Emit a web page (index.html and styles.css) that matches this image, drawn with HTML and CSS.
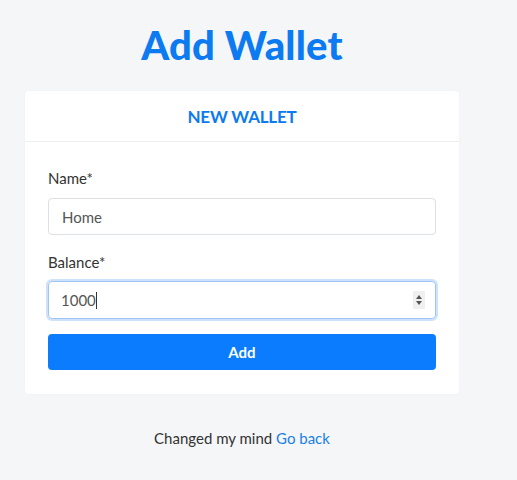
FILE: index.html
```html
<!DOCTYPE html>
<html>
<head>
<meta charset="utf-8">
<link rel="stylesheet" href="styles.css">
</head>
<body>
<div class="page">
  <h1 class="title">Add Wallet</h1>
  <div class="card">
    <div class="card-header">NEW WALLET</div>
    <form class="card-body">
      <label class="label">Name*</label>
      <div class="input"><span>Home</span></div>
      <label class="label label-2">Balance*</label>
      <div class="input input-focus"><span>1000</span><span class="caret"></span>
        <span class="spin"><svg width="8" height="12" viewBox="0 0 8 12"><path d="M4 1 L7 5 L1 5 Z M4 11 L7 7 L1 7 Z" fill="#555"/></svg></span>
      </div>
      <button type="button" class="btn">Add</button>
    </form>
  </div>
  <p class="footer">Changed my mind <a class="link">Go back</a></p>
</div>
</body>
</html>
```
FILE: styles.css
```css
html, body { margin: 0; padding: 0; }
body {
  background: #f5f6f8;
  font-family: Lato, "Open Sans", sans-serif;
  color: #333;
  width: 517px;
  height: 480px;
  overflow: hidden;
}
.page {
  width: 434px;
  margin-left: 25px;
  padding-top: 20px;
  display: flex;
  flex-direction: column;
}
.title {
  margin: 0;
  text-align: center;
  font-size: 40px;
  font-weight: 900;
  color: #0c7af0;
  line-height: 50px;
  letter-spacing: 0.2px;
}
.card {
  margin-top: 21px;
  background: #fff;
  border-radius: 4px;
  box-shadow: 0 0 2px rgba(0,0,0,0.04);
}
.card-header {
  height: 50px;
  border-bottom: 1px solid #eceef1;
  display: flex;
  align-items: center;
  justify-content: center;
  font-weight: 700;
  font-size: 17px;
  color: #0c7af0;
  letter-spacing: -0.2px;
}
.card-body {
  padding: 27px 23px 24px;
  display: flex;
  flex-direction: column;
  margin: 0;
}
.label {
  font-size: 15px;
  line-height: 18px;
  color: #333;
  margin-bottom: 11px;
}
.label-2 { margin-top: 18px; margin-bottom: 10px; }
.input {
  height: 35px;
  border: 1px solid #dcdfe3;
  border-radius: 4px;
  display: flex;
  align-items: center;
  padding: 0 11px 0 13px;
  font-size: 15px;
  color: #555;
  position: relative;
}
.input-focus {
  border-color: #9ec5f5;
  box-shadow: 0 0 0 2px #cfe2fb;
  height: 36px;
  padding-left: 12px;
}
.caret {
  display: inline-block;
  width: 1px;
  height: 17px;
  background: #333;
}
.spin {
  margin-left: auto;
  width: 12px;
  height: 18px;
  background: #f0f0f0;
  display: flex;
  align-items: center;
  justify-content: center;
  margin-right: -1px;
}
.btn {
  margin-top: 15px;
  height: 36px;
  border: none;
  border-radius: 4px;
  background: #0a7cfd;
  color: #fff;
  font-family: Lato, sans-serif;
  font-size: 15px;
  font-weight: 700;
}
.footer {
  margin: 35px 0 0;
  text-align: center;
  font-size: 15px;
  color: #333;
}
.link { color: #1a7fe6; }
```
